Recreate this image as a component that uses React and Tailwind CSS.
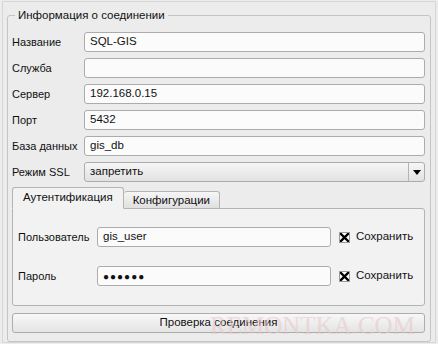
import { useState } from "react";

const font = { fontFamily: '"Liberation Sans", Arial, sans-serif' };

const Field = ({ value, className = "" }) => (
  <div
    className={`h-[20px] flex items-center px-[5px] bg-[#fbfbfb] border border-[#acacac] rounded-[3px] text-[11.5px] text-[#111] ${className}`}
  >
    {value}
  </div>
);

const Row = ({ label, children }) => (
  <div className="flex items-center h-[20px]">
    <div className="w-[72px] shrink-0 text-[11px] text-[#111]">{label}</div>
    <div className="flex-1">{children}</div>
  </div>
);

const Save = () => (
  <div className="flex items-center gap-[6px] ml-[8px]">
    <div className="w-[11px] h-[11px] bg-white border border-[#9a9a9a] flex items-center justify-center">
      <svg width="9" height="9" viewBox="0 0 9 9">
        <path d="M1 1 L8 8 M8 1 L1 8" stroke="#000" strokeWidth="2.4" strokeLinecap="square" />
      </svg>
    </div>
    <span className="text-[11.5px] text-[#111]">Сохранить</span>
  </div>
);

export default function App() {
  const [tab, setTab] = useState(0);

  return (
    <div className="w-[438px] h-[344px] bg-[#ececec] px-[2px] pt-[1px] relative overflow-hidden" style={font}>
      <div className="h-[342px] border border-[#d6d6d6] px-[4px]">
        <fieldset className="border border-[#c4c4c4] rounded-[3px] pl-[4px] pr-[5px] pb-[7px] mt-[6px] h-[334px]">
          <legend className="ml-[3px] px-[3px] text-[11.5px] leading-[14px] text-[#111]">
            Информация о соединении
          </legend>

          <div className="flex flex-col gap-[6px] pt-[10px]">
            <Row label="Название"><Field value="SQL-GIS" /></Row>
            <Row label="Служба"><Field value="" /></Row>
            <Row label="Сервер"><Field value="192.168.0.15" /></Row>
            <Row label="Порт"><Field value="5432" /></Row>
            <Row label="База данных"><Field value="gis_db" /></Row>
            <Row label="Режим SSL">
              <div className="h-[20px] flex items-center border border-[#acacac] rounded-[3px] bg-gradient-to-b from-[#f6f6f6] to-[#e2e2e2] text-[11.5px] text-[#111]">
                <span className="flex-1 px-[5px]">запретить</span>
                <div className="w-[16px] h-full border-l border-[#b4b4b4] flex items-center justify-center">
                  <svg width="8" height="5" viewBox="0 0 8 5">
                    <path d="M0 0 H8 L4 5 Z" fill="#000" />
                  </svg>
                </div>
              </div>
            </Row>
          </div>

          <div className="mt-[5px]">
            <div className="flex items-end h-[21px]">
              <button
                onClick={() => setTab(0)}
                className={`px-[10px] text-[11.5px] text-[#111] border border-[#b4b4b4] rounded-t-[3px] -mb-px ${
                  tab === 0 ? "h-[22px] bg-[#f2f2f2] border-b-[#f2f2f2] relative z-10" : "h-[18px] bg-gradient-to-b from-[#f6f6f6] to-[#e0e0e0]"
                }`}
              >
                Аутентификация
              </button>
              <button
                onClick={() => setTab(1)}
                className={`px-[9px] text-[11.5px] text-[#111] border border-[#b4b4b4] border-l-0 rounded-t-[3px] -mb-px ${
                  tab === 1 ? "h-[22px] bg-[#f2f2f2] border-b-[#f2f2f2] relative z-10" : "h-[18px] bg-gradient-to-b from-[#f6f6f6] to-[#e0e0e0]"
                }`}
              >
                Конфигурации
              </button>
            </div>
            <div className="h-[98px] border border-[#b4b4b4] rounded-b-[3px] rounded-tr-[3px] bg-[#f2f2f2] pl-[5px] pr-[8px] pt-[18px] flex flex-col gap-[19px]">
              {tab === 0 && (
                <>
                  <div className="flex items-center h-[20px]">
                    <div className="w-[79px] shrink-0 text-[11px] text-[#111]">Пользователь</div>
                    <Field value="gis_user" className="w-[234px]" />
                    <Save />
                  </div>
                  <div className="flex items-center h-[20px]">
                    <div className="w-[79px] shrink-0 text-[11px] text-[#111]">Пароль</div>
                    <Field value={<span className="tracking-[1px] text-[10px]">●●●●●●</span>} className="w-[234px]" />
                    <Save />
                  </div>
                </>
              )}
            </div>
          </div>

          <button className="mt-[7px] w-full h-[20px] border border-[#acacac] rounded-[3px] bg-gradient-to-b from-[#f8f8f8] to-[#e4e4e4] text-[11.5px] text-[#111]">
            Проверка соединения
          </button>
        </fieldset>
      </div>

      <div
        className="absolute left-[210px] top-[312px] text-[25px] leading-[28px] text-[#e9c9c9] opacity-60 pointer-events-none"
        style={{ fontFamily: '"Liberation Serif", "Times New Roman", serif' }}
      >
        REMONTKA.COM
      </div>
    </div>
  );
}
